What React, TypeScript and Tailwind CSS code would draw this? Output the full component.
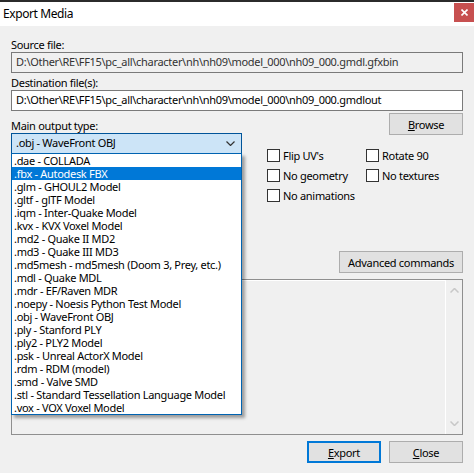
import React from 'react'

const formats = [
  '.dae - COLLADA',
  '.fbx - Autodesk FBX',
  '.glm - GHOUL2 Model',
  '.gltf - glTF Model',
  '.iqm - Inter-Quake Model',
  '.kvx - KVX Voxel Model',
  '.md2 - Quake II MD2',
  '.md3 - Quake III MD3',
  '.md5mesh - md5mesh (Doom 3, Prey, etc.)',
  '.mdl - Quake MDL',
  '.mdr - EF/Raven MDR',
  '.noepy - Noesis Python Test Model',
  '.obj - WaveFront OBJ',
  '.ply - Stanford PLY',
  '.ply2 - PLY2 Model',
  '.psk - Unreal ActorX Model',
  '.rdm - RDM (model)',
  '.smd - Valve SMD',
  '.stl - Standard Tessellation Language Model',
  '.vox - VOX Voxel Model',
]

function Check({ label }: { label: string }) {
  return (
    <div className="flex h-[20px] items-start gap-[3px]">
      <span className="block h-[13px] w-[13px] shrink-0 border border-[#333333] bg-white" />
      <span className="leading-[13px]">{label}</span>
    </div>
  )
}

function Button({
  children,
  className = '',
  primary = false,
}: {
  children: React.ReactNode
  className?: string
  primary?: boolean
}) {
  return (
    <div
      className={
        'flex h-[22px] items-center justify-center bg-[#e1e1e1] leading-none ' +
        (primary ? 'border-2 border-[#0078d7] ' : 'border border-[#adadad] ') +
        className
      }
    >
      {children}
    </div>
  )
}

export default function App() {
  return (
    <div
      className="relative h-[473px] w-[474px] overflow-hidden bg-[#f0f0f0] text-[11px] tracking-[-0.3px] text-black"
      style={{ fontFamily: '"Noto Sans", "Segoe UI", sans-serif' }}
    >
      {/* title bar */}
      <div className="h-[2px] bg-[#2b2b2b]" />
      <div className="flex h-[24px] items-start justify-between bg-white">
        <span className="pl-[3px] pt-[4px] text-[12px] leading-[15px] tracking-[-0.4px]">Export Media</span>
        <div className="mt-[1px] flex h-[19px] w-[20px] items-center justify-center bg-[#c75050]">
          <svg width="7" height="7" viewBox="0 0 7 7">
            <path d="M0.5 0.5 L6.5 6.5 M6.5 0.5 L0.5 6.5" stroke="white" strokeWidth="1.6" />
          </svg>
        </div>
      </div>

      <div className="flex flex-col px-[11px]">
        <div className="mt-[11px] leading-[15px]">Source file:</div>
        <div className="flex h-[21px] items-center border border-[#7a7a7a] bg-[#f0f0f0] pl-[4px] text-[#333]">
          D:\Other\RE\FF15\pc_all\character\nh\nh09\model_000\nh09_000.gmdl.gfxbin
        </div>
        <div className="mt-[2px] leading-[15px]">Destination file(s):</div>
        <div className="flex h-[21px] items-center border border-[#7a7a7a] bg-white pl-[4px]">
          D:\Other\RE\FF15\pc_all\character\nh\nh09\model_000\nh09_000.gmdlout
        </div>

        <div className="flex">
          <div className="flex w-[231px] flex-col">
            <div className="pt-[8px] leading-[14px]">Main output type:</div>
            <div className="flex h-[21px] items-center justify-between border border-[#005499] bg-[#cce4f7] pl-[4px] pr-[6px]">
              <span>.obj - WaveFront OBJ</span>
              <svg width="9" height="5" viewBox="0 0 9 5">
                <path d="M0.5 0.5 L4.5 4.5 L8.5 0.5" fill="none" stroke="#333" strokeWidth="1.2" />
              </svg>
            </div>
          </div>
          <div className="flex flex-1 flex-col">
            <Button className="ml-auto mt-[2px] w-[74px]">
              <span>
                <span className="underline">B</span>rowse
              </span>
            </Button>
            <div className="mt-[14px] flex pl-[25px]">
              <div className="flex w-[99px] flex-col">
                <Check label="Flip UV's" />
                <Check label="No geometry" />
                <Check label="No animations" />
              </div>
              <div className="flex flex-col">
                <Check label="Rotate 90" />
                <Check label="No textures" />
              </div>
            </div>
          </div>
        </div>

        <div className="mt-[42px] flex justify-end">
          <Button className="w-[124px]">Advanced commands</Button>
        </div>

        <div className="mt-[6px] flex h-[156px] border border-[#8f8f8f] bg-[#f0f0f0]">
          <div className="flex-1 border-t border-white" />
          <div className="flex w-[17px] flex-col items-center justify-between border-l border-white py-[8px]">
            <svg width="9" height="5" viewBox="0 0 9 5">
              <path d="M0.5 4.5 L4.5 0.5 L8.5 4.5" fill="none" stroke="#c8c8c8" strokeWidth="1.5" />
            </svg>
            <svg width="9" height="5" viewBox="0 0 9 5">
              <path d="M0.5 0.5 L4.5 4.5 L8.5 0.5" fill="none" stroke="#c8c8c8" strokeWidth="1.5" />
            </svg>
          </div>
        </div>

        <div className="mt-[6px] flex justify-end gap-[8px]">
          <Button primary className="w-[74px]">
            <span>
              <span className="underline">E</span>xport
            </span>
          </Button>
          <Button className="w-[74px]">
            <span>
              <span className="underline">C</span>lose
            </span>
          </Button>
        </div>
      </div>

      {/* open dropdown list */}
      <div className="absolute left-[11px] top-[153px] w-[231px] border border-[#0063b1] bg-white shadow-[3px_3px_3px_rgba(0,0,0,0.35)]">
        {formats.map((f) => (
          <div
            key={f}
            className={
              'h-[13px] whitespace-nowrap pl-[2px] leading-[13px] ' +
              (f.startsWith('.fbx') ? 'bg-[#0078d7] text-white' : '')
            }
          >
            {f}
          </div>
        ))}
      </div>
    </div>
  )
}
